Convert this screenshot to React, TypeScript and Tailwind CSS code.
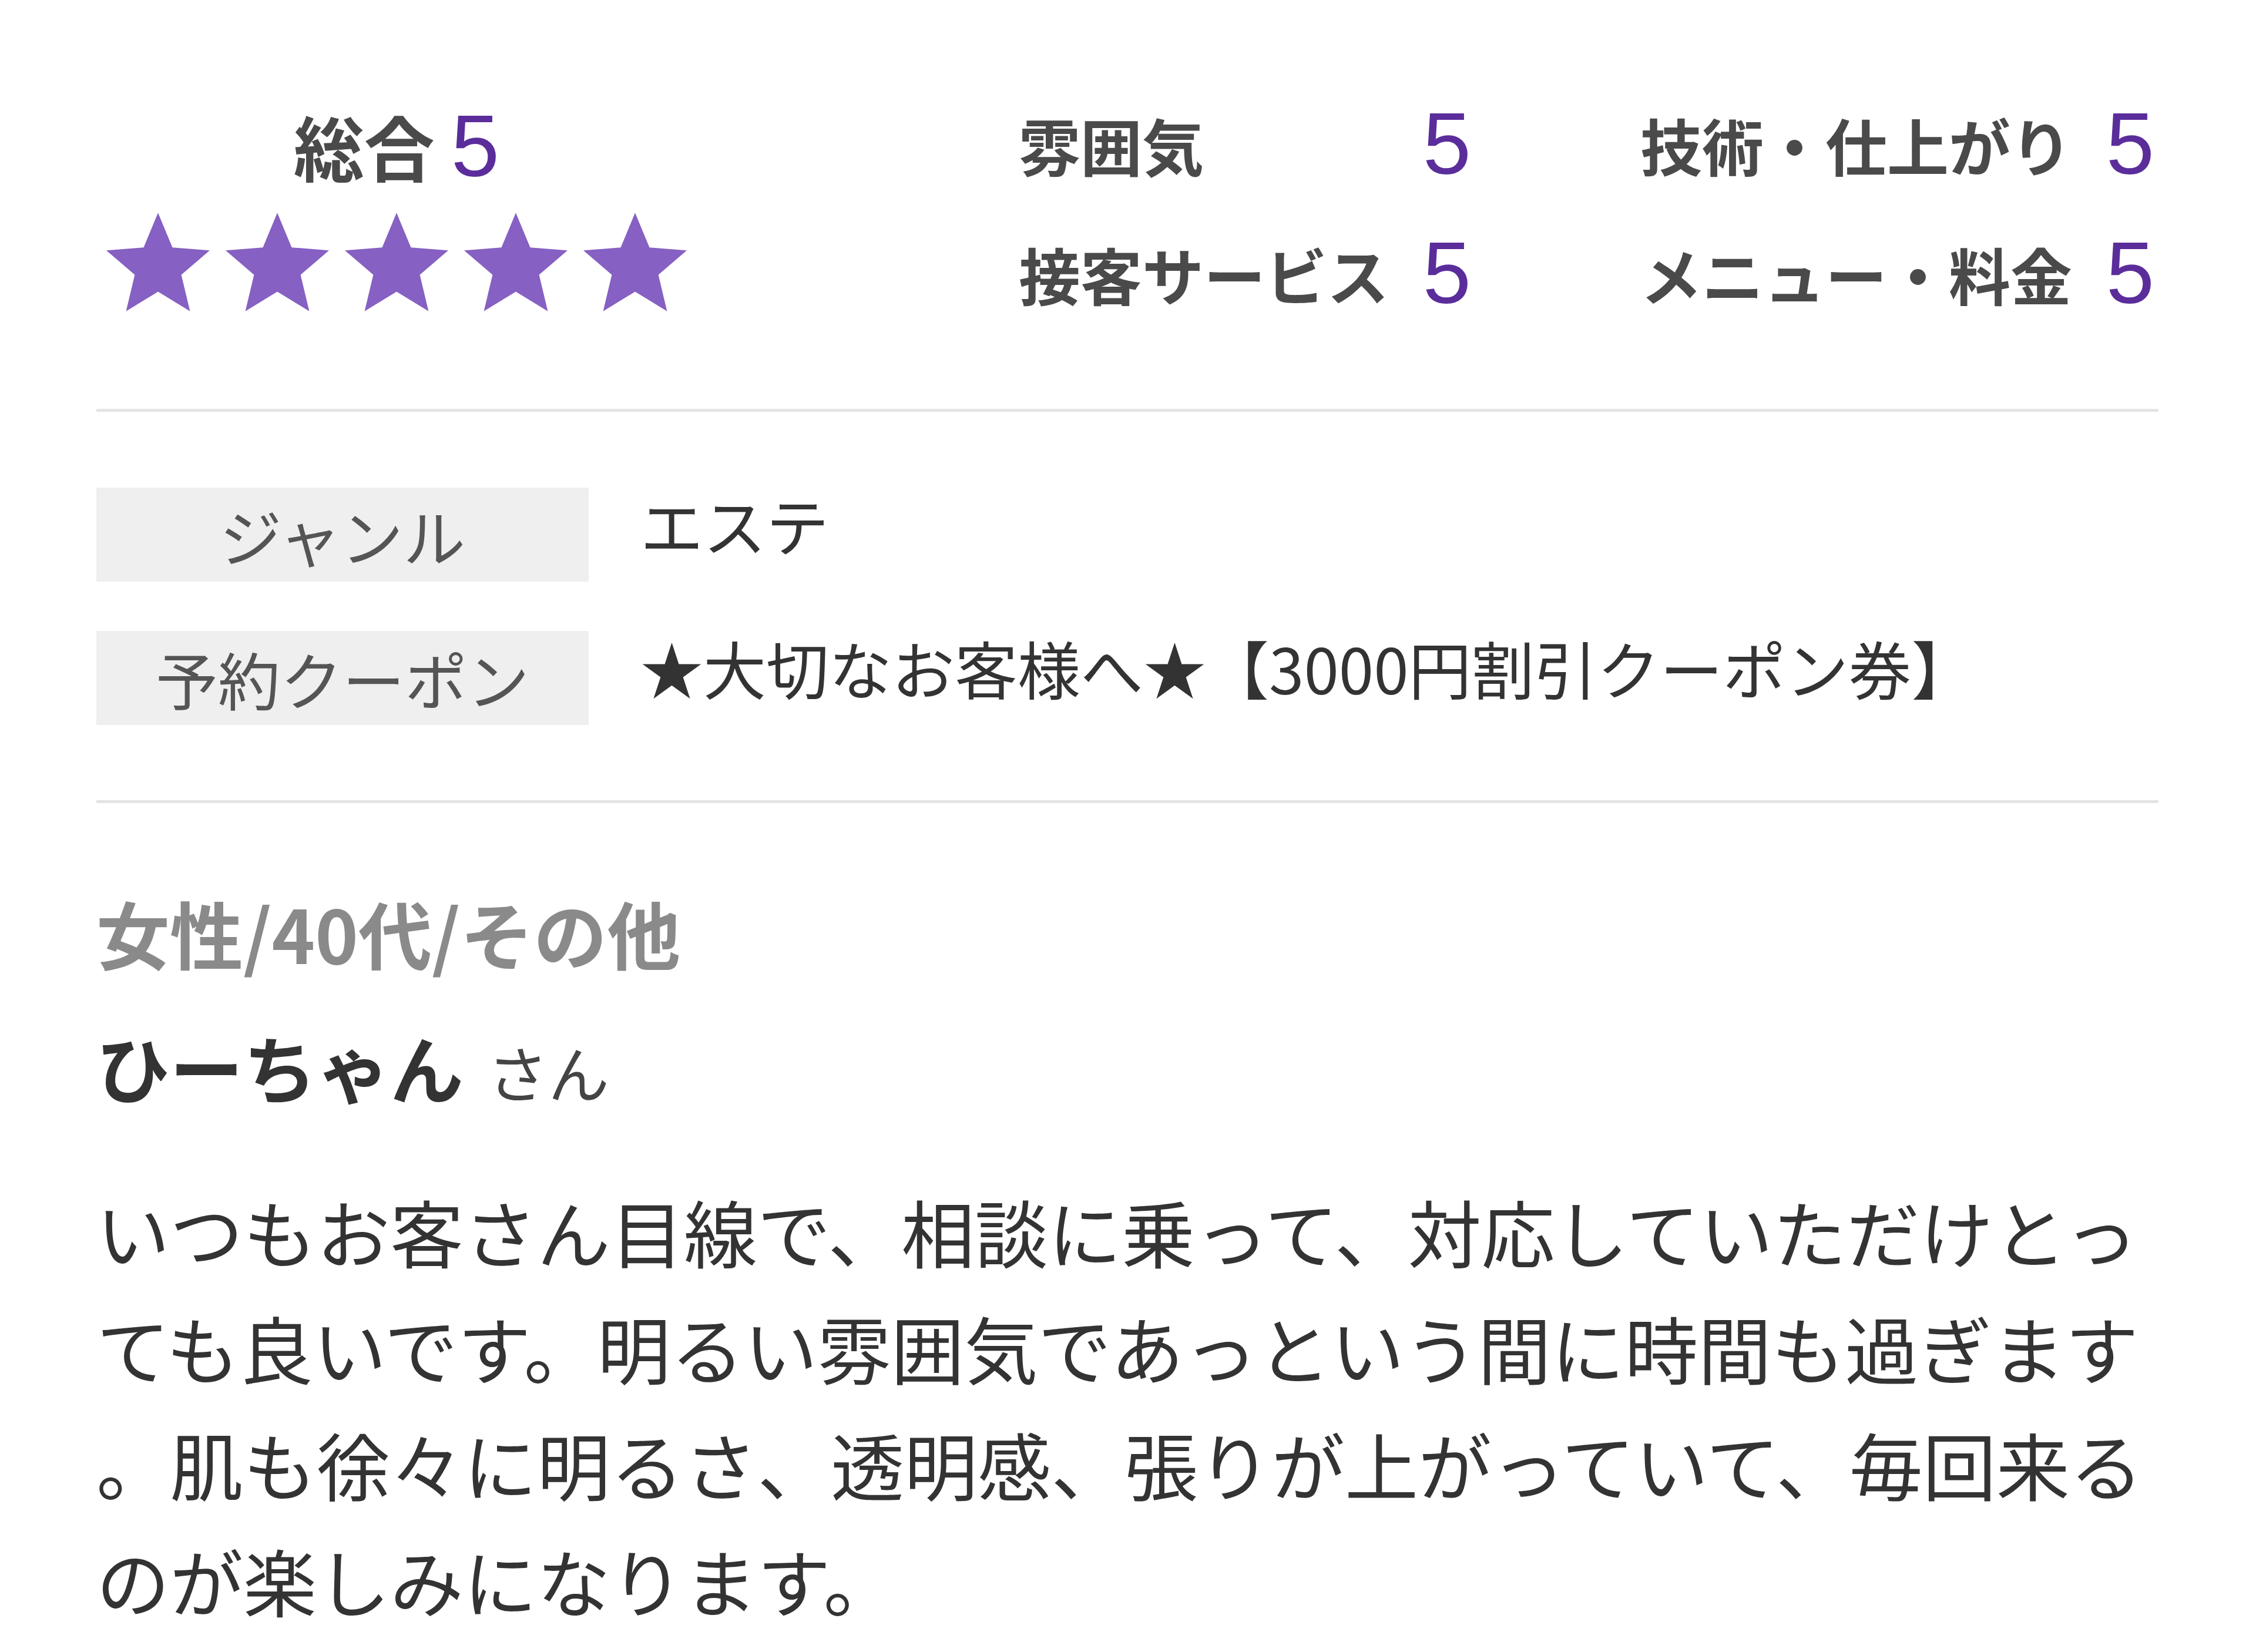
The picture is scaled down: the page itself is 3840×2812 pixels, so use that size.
import React from 'react';

const jp = { fontFamily: '"Noto Sans CJK JP", "Noto Sans", sans-serif' };
const num = { fontFamily: '"Liberation Sans", Arial, sans-serif' };

const Star: React.FC = () => (
  <svg width="176" height="168" viewBox="2.45 2.5 95.1 90.45">
    <polygon
      fill="#8660c2"
      points="50,2.5 63.23,34.3 97.55,37.05 71.4,59.45 79.39,92.95 50,75 20.61,92.95 28.6,59.45 2.45,37.05 36.77,34.3"
    />
  </svg>
);

const scores = [
  { label: '雰囲気', value: 5 },
  { label: '技術・仕上がり', value: 5 },
  { label: '接客サービス', value: 5 },
  { label: 'メニュー・料金', value: 5 },
];

const details = [
  { label: 'ジャンル', value: 'エステ' },
  { label: '予約クーポン', value: '★大切なお客様へ★【3000円割引クーポン券】' },
];

// 原文の改行位置をそのまま再現する（句点が行頭に来る）
const lines = [
  'いつもお客さん目線で、相談に乗って、対応していただけとっ',
  'ても良いです。明るい雰囲気であっという間に時間も過ぎます',
  '。肌も徐々に明るさ、透明感、張りが上がっていて、毎回来る',
  'のが楽しみになります。',
];

export default function App() {
  return (
    <div className="w-[3840px] h-[2812px] bg-white overflow-hidden pl-[164px] pr-[166px] pt-[170px]" style={jp}>
      {/* 評価 */}
      <div className="flex">
        <div className="w-[1022px] flex flex-col items-center pt-[3px]">
          <div className="flex items-baseline h-[150px] leading-[150px]">
            <span className="text-[120px] font-bold text-[#4a4a4a]">総合</span>
            <span className="text-[148px] text-[#5b2d9b] ml-[28px]" style={num}>5</span>
          </div>
          <div className="flex gap-[27px] mt-[39px]">
            {[0, 1, 2, 3, 4].map((i) => (
              <Star key={i} />
            ))}
          </div>
        </div>
        <div className="ml-[548px] grid grid-cols-[770px_875px] gap-x-[288px] gap-y-[70px]">
          {scores.map((s) => (
            <div key={s.label} className="flex items-center justify-between h-[150px]">
              <span className="text-[105px] font-semibold text-[#4a4a4a] leading-[150px] whitespace-nowrap">{s.label}</span>
              <span className="text-[148px] text-[#5b2d9b] leading-[150px]" style={num}>{s.value}</span>
            </div>
          ))}
        </div>
      </div>

      <div className="h-[5px] bg-[#e4e4e4] mt-[156px]" />

      {/* ジャンル・クーポン */}
      <div className="flex flex-col gap-[84px] mt-[129px]">
        {details.map((d) => (
          <div key={d.label} className="flex items-start">
            <div className="w-[838px] h-[160px] bg-[#efefef] flex items-center justify-center text-[106px] text-[#555]">
              {d.label}
            </div>
            <div className="ml-[88px] text-[107px] leading-[124px] text-[#333] whitespace-nowrap">{d.value}</div>
          </div>
        ))}
      </div>

      <div className="h-[5px] bg-[#e4e4e4] mt-[128px]" />

      {/* 投稿者 */}
      <div className="mt-[145px] text-[125px] leading-[150px] font-bold text-[#8a8a8a]">女性/40代/その他</div>
      <div className="mt-[78px] flex items-baseline leading-[150px]">
        <span className="text-[125px] font-bold text-[#333]">ひーちゃん</span>
        <span className="text-[104px] text-[#444] ml-[40px]">さん</span>
      </div>

      {/* 本文 */}
      <div className="mt-[97px] text-[125px] leading-[198px] text-[#333]">
        {lines.map((l) => (
          <div key={l} className="whitespace-nowrap">{l}</div>
        ))}
      </div>
    </div>
  );
}
